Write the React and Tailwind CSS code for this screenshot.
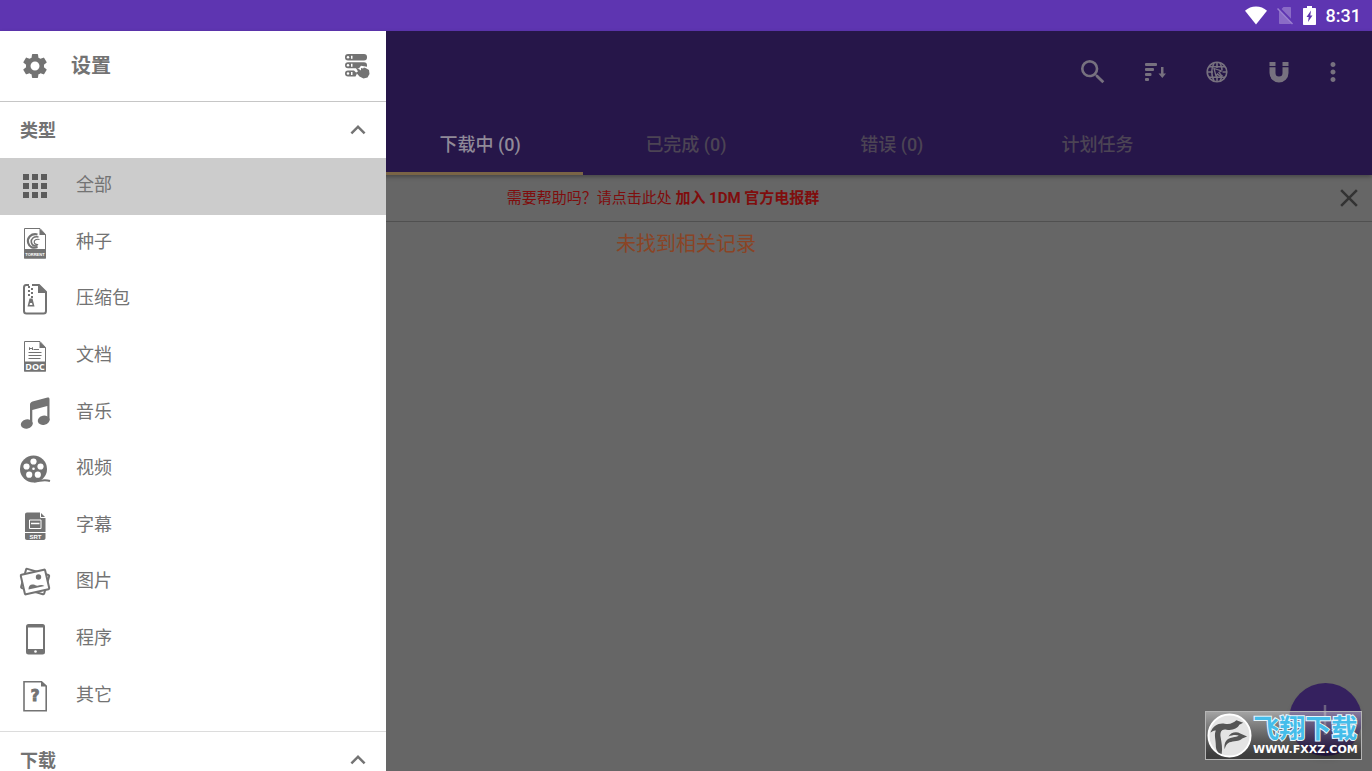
import { useState } from "react";
import {
  MdApps,
  MdClose,
  MdKeyboardArrowUp,
  MdMoreVert,
  MdSearch,
  MdSettings,
} from "react-icons/md";

/* ---------- status bar icons ---------- */

const WifiIcon = () => (
  <svg viewBox="0 0 22 19" className="w-[22px] h-[19px]" fill="currentColor">
    <path d="M11 18.500 0 4.800C3 2 6.800.5 11 .5s8 1.500 11 4.300z" />
  </svg>
);

const NoSimIcon = () => (
  <svg viewBox="0 0 16 19" className="w-4 h-[19px]">
    <path d="M6.500 1H13c.6 0 1 .4 1 1v15c0 .6-.4 1-1 1H3c-.6 0-1-.4-1-1V5.500z" fill="#8a6bc6" />
    <path d="M1.500 1.500 16 16.500" stroke="#5e35b1" strokeWidth="2.500" />
    <path d="M.5 2.500 15.500 18" stroke="#9a7fd0" strokeWidth="1.500" />
  </svg>
);

const BatteryIcon = () => (
  <svg viewBox="0 0 13 19" className="w-[13px] h-[19px]">
    <path
      d="M4 0h5v2h3c.6 0 1 .4 1 1v15c0 .6-.4 1-1 1H1c-.6 0-1-.4-1-1V3c0-.6.4-1 1-1h3z"
      fill="#fff"
    />
    <path d="M8 4.500 3.500 11h2.200L5 16l4.500-6.500H7.300z" fill="#5e35b1" />
  </svg>
);

/* ---------- toolbar icons ---------- */

const SortIcon = () => (
  <svg viewBox="0 0 22 20" className="w-[22px] h-5" fill="currentColor">
    <rect x="1" y="1" width="12" height="3" rx="1" />
    <rect x="1" y="6" width="9" height="3" rx="1" />
    <rect x="1" y="11" width="6.500" height="3" rx="1" />
    <rect x="1" y="16" width="4" height="3" rx="1" />
    <path d="M17 5h2.500v6.500H22l-3.700 4.500-3.800-4.500H17z" />
  </svg>
);

const GlobeIcon = () => (
  <svg
    viewBox="0 0 22 22"
    className="w-[22px] h-[22px]"
    fill="none"
    stroke="currentColor"
    strokeWidth="1.600"
  >
    <circle cx="11" cy="11" r="9.800" />
    <path d="M8 20C5 14 5 8 8 2M14 20c1.200-2 1.800-4 2-6M14 2c1.300 2.500 2 5 2 7M11 1v6M11 15v6" />
    <path d="M1.200 11H7M16.500 11H21M3 5.800h16M3 16.200h16" />
    <path d="m8 7.500 7.500 2.500-2.500 1.500 2.500 3-1 1-3-2.500-1.500 2z" strokeWidth="1.300" />
  </svg>
);

const MagnetIcon = () => (
  <svg viewBox="0 0 20 22" className="w-5 h-[22px]" fill="currentColor">
    <path d="M.5 1h6v4h-6zM13.500 1h6v4h-6z" />
    <path d="M.5 6.300h6V12a3.500 3.500 0 0 0 7 0V6.300h6V12a9.500 9.500 0 0 1-19 0z" />
  </svg>
);

/* ---------- drawer icons ---------- */

const ServerIcon = () => (
  <svg viewBox="0 0 26 26" className="w-[26px] h-[26px]">
    <g fill="currentColor">
      <rect x="1" y="1" width="22" height="6.500" rx="3" />
      <path d="M4 9.300h16c2 0 3 1 3 3v1.500l-6-1-2 2.500H4a3 3 0 0 1 0-6z" />
      <path d="M4 17.500h6l3 3-1.500 3H4a3 3 0 0 1 0-6z" />
      <path d="m11 13.500 6 4V15l2 .6 1-1 2 .6 3 1.800.500 4-2 3.500-4 1-4-2-3.500-4 2-1z" />
    </g>
    <g fill="#fff">
      <circle cx="4" cy="4.200" r="1.200" />
      <circle cx="4" cy="12.300" r="1.200" />
      <circle cx="4" cy="20.500" r="1.200" />
      <path d="M7 2.700h1.500v3H7zM7 10.800h1.500v3H7zM7 19h1.500v3H7z" />
    </g>
  </svg>
);

const TorrentIcon = () => (
  <svg viewBox="0 0 32 32" className="w-8 h-8">
    <path d="M5.500 1.500h15.500l5.500 6V31h-21z" fill="#fff" stroke="#737373" />
    <path d="M20.500 1.500v6.500h6.500z" fill="#737373" />
    <g fill="none" stroke="#737373">
      <path d="M18.500 7.500C12 6 7.800 11 9.200 16c1 4 5 5.800 9.300 4" strokeWidth="2.200" />
      <path d="M19.500 10c-5-1-7.500 2-7.200 5 .5 3 3.200 4.300 6.200 3.800" strokeWidth="1.600" />
      <path d="M20.500 12.500c-3.200-.8-5.500.7-5.300 2.700.2 1.800 2 2.600 4 2.300" strokeWidth="1.200" />
    </g>
    <path d="M5 22h22v9.500H5z" fill="#737373" />
    <text
      x="16"
      y="28.500"
      textAnchor="middle"
      fill="#fff"
      className="font-['Liberation_Sans'] text-[4px] font-bold"
    >
      TORRENT
    </text>
  </svg>
);

const ZipIcon = () => (
  <svg viewBox="0 0 32 32" className="w-8 h-8">
    <path
      d="M7 2h13l7 7v19c0 1.500-1 2.500-2.500 2.500h-17C6 30.500 5 29.500 5 28V4.500C5 3 5.800 2 7 2z"
      fill="#fff"
      stroke="#737373"
      strokeWidth="2"
    />
    <path d="M19 1.500V10h8.500z" fill="#737373" />
    <path d="M10 0h3v3h-3z" fill="#fff" />
    <path
      d="M9 3h2v2H9zM12 5h2v2h-2zM9 7h2v2H9zM12 9h2v2h-2zM9 11h2v2H9zM12 13h2v2h-2z"
      fill="#737373"
    />
    <path d="M10.500 15.500h3l2 8h-7z" fill="#737373" />
    <path d="M11 20h2l.500 2h-3z" fill="#fff" />
  </svg>
);

const DocIcon = () => (
  <svg viewBox="0 0 32 32" className="w-8 h-8">
    <path d="M5.500 1.500h15.500l5.500 6V31h-21z" fill="#fff" stroke="#737373" />
    <path d="M20.500 1.500v6.500h6.500z" fill="#737373" />
    <path d="M10.500 10V7.500L12 9l1.500-1.500V10M14.500 9.500H20" stroke="#737373" fill="none" />
    <path d="M9.500 12.500h13M9.500 15.500h13M9.500 18.500h12" stroke="#737373" />
    <path d="M5 21.500h22v10H5z" fill="#737373" />
    <text
      x="16"
      y="30"
      textAnchor="middle"
      fill="#fff"
      className="font-['Open_Sans'] text-[9px] font-bold"
    >
      DOC
    </text>
  </svg>
);

const MusicIcon = () => (
  <svg viewBox="0 0 32 32" className="w-8 h-8" fill="#737373">
    <path d="M11 7.500c0-1.500 1-2.500 2.500-3L28.500.6c1.300-.3 2 .3 2 1.600v21h-2.200V9L13.300 13V27H11z" />
    <ellipse cx="7.800" cy="27" rx="6" ry="4.600" transform="rotate(-12 7.800 27)" />
    <ellipse cx="24.700" cy="23.300" rx="6" ry="4.600" transform="rotate(-12 24.700 23.300)" />
  </svg>
);

const ReelIcon = () => (
  <svg viewBox="0 0 32 32" className="w-8 h-8">
    <circle cx="14.500" cy="16" r="13.500" fill="#737373" />
    <path d="M15 28.500c6 0 9-2.500 16-.5" stroke="#737373" strokeWidth="2" fill="none" />
    <g fill="#fff">
      <circle cx="14.500" cy="8.500" r="3.100" />
      <circle cx="21.500" cy="13.500" r="3.100" />
      <circle cx="18.800" cy="21.700" r="3.100" />
      <circle cx="10.200" cy="21.700" r="3.100" />
      <circle cx="7.500" cy="13.500" r="3.100" />
      <circle cx="14.500" cy="15.800" r="1.300" />
    </g>
  </svg>
);

const SrtIcon = () => (
  <svg viewBox="0 0 32 32" className="w-8 h-8">
    <path
      d="M8 2.500h13.500l5 5V28c0 1.200-.8 2-2 2H8c-1.200 0-2-.8-2-2V4.500c0-1.200.8-2 2-2z"
      fill="#737373"
    />
    <path d="M21.500 2v5.500H27" stroke="#fff" fill="none" />
    <path d="M10.500 10h11.500v8.500H10.500z" stroke="#fff" fill="none" />
    <path d="M12 13.500h8.500" stroke="#fff" strokeWidth="1.500" />
    <path d="M6 22.500h21" stroke="#fff" />
    <text
      x="16.500"
      y="29"
      textAnchor="middle"
      fill="#fff"
      className="font-['Liberation_Sans'] text-[6px] font-bold"
    >
      SRT
    </text>
  </svg>
);

const PhotoIcon = () => (
  <svg viewBox="0 0 32 32" className="w-8 h-8">
    <g fill="#fff" stroke="#737373" strokeWidth="2">
      <rect x="4" y="5.500" width="24" height="20" rx="1" transform="rotate(16 16 16)" />
      <rect x="3.500" y="6" width="25" height="20" rx="1" transform="rotate(-13 16 16)" />
    </g>
    <circle cx="19.500" cy="11" r="2.700" fill="#737373" />
    <path
      d="M9.500 23.500c0-4 2-5.500 5-5 1.800.3 2.500 1.500 4 1.200 2-.4 4.500-1.500 7 .300z"
      fill="#737373"
    />
  </svg>
);

const PhoneIcon = () => (
  <svg viewBox="0 0 32 32" className="w-8 h-8">
    <rect x="7" y="1" width="19" height="30.500" rx="2.500" fill="#737373" />
    <path d="M9 4.500h15v21.500H9z" fill="#fff" />
    <circle cx="16.500" cy="28.500" r="1.300" fill="#fff" />
  </svg>
);

const UnknownIcon = () => (
  <svg viewBox="0 0 32 32" className="w-8 h-8">
    <path d="M5 1.800h17.500L27.200 6v24.800H5z" fill="#fff" stroke="#737373" strokeWidth="1.600" />
    <path d="M22 1v5.500h6z" fill="#737373" />
    <text
      x="16"
      y="21"
      textAnchor="middle"
      fill="#737373"
      stroke="#737373"
      className="font-['DejaVu_Sans'] text-[15px] font-bold"
    >
      ?
    </text>
  </svg>
);

const AllIcon = () => <MdApps className="w-9 h-9 shrink-0 text-[#5c5c5c]" />;

const types = [
  { label: "全部", Icon: AllIcon },
  { label: "种子", Icon: TorrentIcon },
  { label: "压缩包", Icon: ZipIcon },
  { label: "文档", Icon: DocIcon },
  { label: "音乐", Icon: MusicIcon },
  { label: "视频", Icon: ReelIcon },
  { label: "字幕", Icon: SrtIcon },
  { label: "图片", Icon: PhotoIcon },
  { label: "程序", Icon: PhoneIcon },
  { label: "其它", Icon: UnknownIcon },
];

const tabs = ["下载中 (0)", "已完成 (0)", "错误 (0)", "计划任务"];

const StatusBar = () => (
  <header className="h-[31px] shrink-0 bg-[#5e35b1] text-white flex items-center justify-end gap-[10px] pr-[11px]">
    <WifiIcon />
    <NoSimIcon />
    <BatteryIcon />
    <span className="text-lg leading-none font-medium">8:31</span>
  </header>
);

const SectionHeader = ({ title }) => (
  <button
    type="button"
    className="w-full h-14 pl-5 pr-[13px] flex items-center justify-between text-lg font-bold"
  >
    <span className="pt-0.5">{title}</span>
    <MdKeyboardArrowUp className="w-[30px] h-[30px]" />
  </button>
);

const Drawer = () => {
  const [selected, setSelected] = useState("全部");

  return (
    <aside className="absolute inset-y-0 left-0 w-[386px] overflow-hidden bg-white text-[#737373]">
      <div className="h-[71px] border-b border-[#c6c6c6] pl-5 pr-4 flex items-center justify-between">
        <button type="button" className="flex items-center gap-[21px] text-xl font-bold">
          <MdSettings className="w-[30px] h-[30px]" />
          设置
        </button>
        <button type="button" aria-label="服务器">
          <ServerIcon />
        </button>
      </div>

      <SectionHeader title="类型" />
      <ul className="grid grid-rows-10 h-[566px] mb-[7px]">
        {types.map(({ label, Icon }) => (
          <li key={label}>
            <button
              type="button"
              onClick={() => setSelected(label)}
              className={`w-full h-full pl-[19px] flex items-center gap-[25px] text-lg ${
                selected === label ? "bg-[#cccccc]" : ""
              }`}
            >
              <span className="w-8 flex justify-center">
                <Icon />
              </span>
              <span className="pb-0.5">{label}</span>
            </button>
          </li>
        ))}
      </ul>

      <div className="border-t border-[#dcdcdc]">
        <SectionHeader title="下载" />
      </div>
    </aside>
  );
};

const Toolbar = () => (
  <div className="h-[82px] flex items-center justify-end pr-6 text-[#77717f]">
    <button type="button" aria-label="搜索" className="w-[62px] flex justify-center">
      <MdSearch className="w-8 h-8" />
    </button>
    <button type="button" aria-label="排序" className="w-[62px] flex justify-center">
      <SortIcon />
    </button>
    <button type="button" aria-label="浏览器" className="w-[62px] flex justify-center">
      <GlobeIcon />
    </button>
    <button type="button" aria-label="磁力" className="w-[62px] flex justify-center">
      <MagnetIcon />
    </button>
    <button type="button" aria-label="更多" className="w-[30px] ml-2">
      <MdMoreVert className="w-[30px] h-[30px]" />
    </button>
  </div>
);

const Tabs = () => {
  const [active, setActive] = useState(0);

  return (
    <div className="grid grid-cols-4 w-[60%] ml-[27.5%] h-[62px]">
      {tabs.map((tab, i) => (
        <button
          key={tab}
          type="button"
          onClick={() => setActive(i)}
          className={`border-b-3 pt-1 text-lg font-medium ${
            active === i
              ? "border-[#796446] text-[#908a98]"
              : "border-transparent text-[#4c4454]"
          }`}
        >
          {tab}
        </button>
      ))}
    </div>
  );
};

const Watermark = () => (
  <div className="absolute right-[10px] bottom-[11px] w-[157px] h-[49px] flex items-center gap-px pl-px border border-[#b5b5b5] bg-linear-to-b from-white/40 to-black/40">
    <svg viewBox="0 0 46 46" className="w-[45px] h-[45px] shrink-0">
      <circle cx="23" cy="23" r="21.500" fill="#e4e4e4" stroke="#fff" strokeWidth="2" />
      <g fill="#555">
        <path d="M3.500 20C6 13 12 10 18 11c6 1 9-1 12-3.500l7 2.500-4 2c-2 4-7 6-13 5-5-1-7 2-6 8s2 11 1 17c-4-1-6-4-6-9 0-6-2-10 0-15-2-.5-4 1-5.500 2z" />
        <path d="M18 37c-1-7 2-11 8-12 3-.5 5-1 6.500-2-3-1-7-.5-10.500 1 2-4 8-5.500 12-3l7 3-5 2c-3 3-9 2.500-13 4-3 1.500-4 4-5 7z" />
      </g>
    </svg>
    <div className="flex flex-col items-center">
      <span className="text-[26px] leading-[28px] font-bold text-[#45bdea] [-webkit-text-stroke:2px_#e6f6fc] [paint-order:stroke_fill]">
        飞翔下载
      </span>
      <span className="font-['DejaVu_Sans'] text-[11px] leading-[14px] font-bold text-white">
        WWW.FXXZ.COM
      </span>
    </div>
  </div>
);

const App = () => {
  return (
    <div className="h-screen flex flex-col overflow-hidden font-[Roboto,'Noto_Sans_CJK_SC',sans-serif]">
      <StatusBar />
      <div className="relative flex-1 min-h-0 bg-[#666666]">
        <div className="relative bg-[#261649] shadow-[0_2px_4px_rgba(0,0,0,0.3)]">
          <Toolbar />
          <Tabs />
        </div>

        <div className="h-[47px] border-b border-[#505050] flex items-center gap-2 pr-2">
          <a href="#telegram" className="flex-1 text-center text-[15px] text-[#7f0d0d]">
            需要帮助吗？请点击此处 <b>加入 1DM 官方电报群</b>
          </a>
          <button type="button" aria-label="关闭" className="text-[#333333]">
            <MdClose className="w-[30px] h-[30px]" />
          </button>
        </div>
        <p className="pt-2 text-center text-xl text-[#8a4425]">未找到相关记录</p>

        <button
          type="button"
          aria-label="添加"
          className="absolute right-[10px] bottom-[15px] w-[73px] h-[73px] rounded-full bg-[#35215f] shadow-md flex items-center justify-center"
        >
          <svg viewBox="0 0 32 32" className="w-8 h-8">
            <path d="M15 1v30M1 16h30" stroke="#6c6280" strokeWidth="2.500" />
          </svg>
        </button>
        <Drawer />
        <Watermark />
      </div>
    </div>
  );
};

export default App;
